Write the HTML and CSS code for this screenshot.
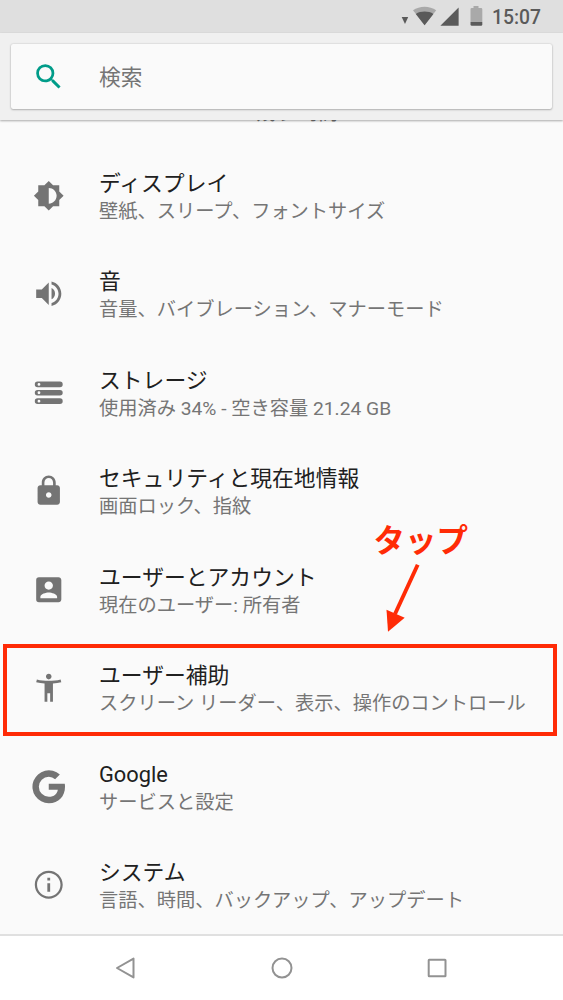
FILE: index.html
```html
<!DOCTYPE html>
<html lang="ja">
<head>
<meta charset="utf-8">
<title>設定</title>
<link rel="stylesheet" href="styles.css">
</head>
<body>
<div class="phone">
  <div class="status">
    <svg class="status-icons" width="86" height="33" viewBox="0 0 86 33">
      <path d="M1.700 17h6.500l-3.200 7z" fill="#5a5a5a"/>
      <path d="M13 10.300c6.500-4.900 16.700-4.900 23.200 0L24.600 25.300z" fill="#a9a9a9"/>
      <path d="M15.800 14c4.800-3.200 12.800-3.200 17.600 0L24.600 25.300z" fill="#5a5a5a"/>
      <path d="M58.600 7.500V25.700H40.400z" fill="#5a5a5a"/>
      <path d="M73.500 6h5v2h2.500q1.300 0 1.300 1.300V22H70.500V9.300Q70.500 8 71.800 8H73.500z" fill="#a9a9a9"/>
      <path d="M70.500 22h11.800v2.500q0 1.300-1.300 1.300h-9.200Q70.500 25.800 70.500 24.500z" fill="#5a5a5a"/>
    </svg>
    <span class="clock">15:07</span>
  </div>
  <header class="header">
    <div class="search">
      <svg class="icon teal" viewBox="0 0 24 24"><path d="M15.500 14h-.79l-.28-.27A6.471 6.471 0 0 0 16 9.500 6.500 6.500 0 1 0 9.500 16c1.610 0 3.090-.59 4.230-1.570l.27.280v.79l5 4.990L20.490 19l-4.990-5zm-6 0C7.010 14 5 11.990 5 9.500S7.010 5 9.500 5 14 7.010 14 9.500 11.990 14 9.500 14z"/></svg>
      <span class="hint">検索</span>
    </div>
  </header>
  <div class="scrolled">残り 時間</div>
  <main class="list">
    <div class="row"><svg class="icon display" viewBox="0 0 24 24"><path d="M20 15.310L23.310 12 20 8.690V4h-4.690L12 .69 8.690 4H4v4.690L.69 12 4 15.310V20h4.690L12 23.310 15.310 20H20v-4.690zM12 18V6c3.310 0 6 2.690 6 6s-2.690 6-6 6z"/></svg><div class="text"><div class="title">ディスプレイ</div><div class="sub">壁紙、スリープ、フォントサイズ</div></div></div>
    <div class="row"><svg class="icon" viewBox="0 0 24 24"><path d="M3 9v6h4l5 5V4L7 9H3zm13.500 3A4.500 4.500 0 0 0 14 7.970v8.050c1.480-.73 2.500-2.250 2.500-4.020zM14 3.230v2.060c2.890.86 5 3.540 5 6.710s-2.110 5.850-5 6.710v2.060c4.010-.91 7-4.490 7-8.770s-2.990-7.860-7-8.770z"/></svg><div class="text"><div class="title">音</div><div class="sub">音量、バイブレーション、マナーモード</div></div></div>
    <div class="row"><svg class="icon" viewBox="0 0 24 24"><path fill-rule="evenodd" d="M4 4h16a2 2 0 0 1 0 4H4a2 2 0 0 1 0-4zM5 5a1 1 0 1 0 0 2 1 1 0 0 0 0-2zM4 10h16a2 2 0 0 1 0 4H4a2 2 0 0 1 0-4zM5 11a1 1 0 1 0 0 2 1 1 0 0 0 0-2zM4 16h16a2 2 0 0 1 0 4H4a2 2 0 0 1 0-4zM5 17a1 1 0 1 0 0 2 1 1 0 0 0 0-2z"/></svg><div class="text"><div class="title">ストレージ</div><div class="sub">使用済み 34% - 空き容量 21.24 GB</div></div></div>
    <div class="row"><svg class="icon" viewBox="0 0 24 24"><path d="M18 8h-1V6c0-2.760-2.240-5-5-5S7 3.240 7 6v2H6c-1.100 0-2 .9-2 2v10c0 1.100.9 2 2 2h12c1.100 0 2-.9 2-2V10c0-1.100-.9-2-2-2zm-6 9c-1.100 0-2-.9-2-2s.9-2 2-2 2 .9 2 2-.9 2-2 2zm3.100-9H8.900V6c0-1.710 1.390-3.100 3.100-3.100s3.100 1.390 3.100 3.100v2z"/></svg><div class="text"><div class="title">セキュリティと現在地情報</div><div class="sub">画面ロック、指紋</div></div></div>
    <div class="row"><svg class="icon" viewBox="0 0 24 24"><path d="M3 5v14a2 2 0 0 0 2 2h14c1.100 0 2-.9 2-2V5c0-1.100-.9-2-2-2H5a2 2 0 0 0-2 2zm12 4c0 1.660-1.340 3-3 3s-3-1.340-3-3 1.340-3 3-3 3 1.340 3 3zm-9 8c0-2 4-3.100 6-3.100s6 1.100 6 3.100v1H6v-1z"/></svg><div class="text"><div class="title">ユーザーとアカウント</div><div class="sub">現在のユーザー: 所有者</div></div></div>
    <div class="row"><svg class="icon" viewBox="0 0 24 24"><path d="M20.500 6c-2.610.7-5.670 1-8.500 1s-5.890-.3-8.500-1L3 8c1.860.5 4 .83 6 1v13h2v-6h2v6h2V9c2-.17 4.140-.5 6-1l-.5-2zM12 6c1.100 0 2-.9 2-2s-.9-2-2-2-2 .9-2 2 .9 2 2 2z"/></svg><div class="text"><div class="title">ユーザー補助</div><div class="sub">スクリーン リーダー、表示、操作のコントロール</div></div></div>
    <div class="row"><svg class="icon google" viewBox="0 0 24 24"><path d="M12 10.100h10.250c.11.600.16 1.210.16 1.860 0 6.080-4.060 10.540-10.350 10.540A10.500 10.500 0 1 1 19.100 4.200l-3.050 2.950A6.100 6.100 0 0 0 12.060 5.600a6.400 6.400 0 1 0 0 12.800c3.480 0 5.340-2.050 5.740-4.550H12z"/></svg><div class="text"><div class="title">Google</div><div class="sub">サービスと設定</div></div></div>
    <div class="row"><svg class="icon" viewBox="0 0 24 24"><path d="M11 17h2v-6h-2v6zm1-15C6.480 2 2 6.480 2 12s4.480 10 10 10 10-4.480 10-10S17.520 2 12 2zm0 18.400c-4.630 0-8.400-3.770-8.400-8.400S7.370 3.600 12 3.600s8.400 3.770 8.400 8.400-3.770 8.400-8.400 8.400zM11 9h2V7h-2v2z"/></svg><div class="text"><div class="title">システム</div><div class="sub">言語、時間、バックアップ、アップデート</div></div></div>
  </main>
  <nav class="nav">
    <svg width="22" height="24" viewBox="0 0 22 24"><path d="M18.500 2.600v18.800L2 12z"/></svg>
    <svg width="22" height="24" viewBox="0 0 22 24"><circle cx="11" cy="12" r="9.500"/></svg>
    <svg width="22" height="24" viewBox="0 0 22 24"><rect x="2.700" y="3.700" width="16.800" height="16.600" rx=".5"/></svg>
  </nav>
  <div class="highlight"></div>
  <div class="tap">タップ</div>
  <svg class="arrow" width="40" height="75" viewBox="0 0 40 75"><path d="M34.700 4.700L12 54" stroke="#ff2b06" stroke-width="3.900"/><path d="M3.500 49.800l18.200 8L5 71.800z" fill="#ff2b06"/></svg>
</div>
</body>
</html>
```
FILE: styles.css
```css
body { margin: 0; }
.phone {
  position: relative;
  width: 563px;
  height: 1000px;
  overflow: hidden;
  display: flex;
  flex-direction: column;
  background: #fafafa;
  font-family: Roboto, "Noto Sans CJK JP", sans-serif;
}
.status {
  height: 33px;
  flex: none;
  box-sizing: border-box;
  padding-right: 22px;
  display: flex;
  justify-content: flex-end;
  align-items: center;
  gap: 6.500px;
  background: #dfdfdf;
}
.clock { font-size: 19.300px; font-weight: 500; line-height: 33px; color: #5a5a5a; padding-top: 2px; }
.header {
  position: relative;
  z-index: 1;
  height: 87px;
  flex: none;
  box-sizing: border-box;
  padding: 11px 11px 0;
  background: #f0f0f0;
  box-shadow: 0 1px 2px rgba(0,0,0,.32);
}
.search {
  height: 65px;
  box-sizing: border-box;
  padding-left: 19px;
  display: flex;
  align-items: center;
  border-radius: 2px;
  background: #fafafa;
  box-shadow: 0 0 2px rgba(0,0,0,.2), 0 1px 2px rgba(0,0,0,.22);
}
.icon { width: 33.500px; height: 33.500px; margin: 0 2.500px 0 2px; flex: none; fill: #747474; }
.icon.display { width: 31.500px; height: 31.500px; margin: 0 3.500px 0 3px; }
.icon.google { width: 37.500px; height: 37.500px; margin: 0 .25px; }
.teal { fill: #009c89; }
.hint { margin: -2px 0 0 31px; font-size: 21.700px; color: #757575; }
.scrolled {
  flex: none;
  height: 27px;
  margin-top: -20px;
  padding-left: 256px;
  line-height: 27px;
  font-size: 19.250px;
  color: #757575;
}
.list { flex: none; height: 807px; box-sizing: border-box; padding-top: 20px; }
.row { height: 98.450px; box-sizing: border-box; padding-left: 30px; display: flex; }
.row .icon { align-self: flex-start; margin-top: 32px; }
.row .icon.display { margin-top: 32.500px; }
.row .icon.google { margin-top: 30.500px; }
.text { margin: 22px 0 0 31px; white-space: nowrap; }
.title { height: 29px; line-height: 30px; font-size: 21.800px; color: #202020; }
.sub { height: 27px; line-height: 27px; font-size: 19.240px; color: #757575; }
.nav {
  flex: 1;
  display: flex;
  justify-content: center;
  align-items: center;
  gap: 133.500px;
  background: #fff;
  border-top: 2px solid #e0e0e0;
  padding-bottom: 1px;
}
.nav svg { fill: none; stroke: #929292; stroke-width: 2; stroke-linejoin: round; }
.highlight { position: absolute; left: 3px; top: 644px; width: 554px; height: 92px; box-sizing: border-box; border: 4px solid #ff2b06; }
.tap { position: absolute; left: 373.500px; top: 521px; font-size: 31.500px; line-height: 42px; font-weight: 700; color: #ff2b06; white-space: nowrap; }
.arrow { position: absolute; left: 383px; top: 560px; }
```
